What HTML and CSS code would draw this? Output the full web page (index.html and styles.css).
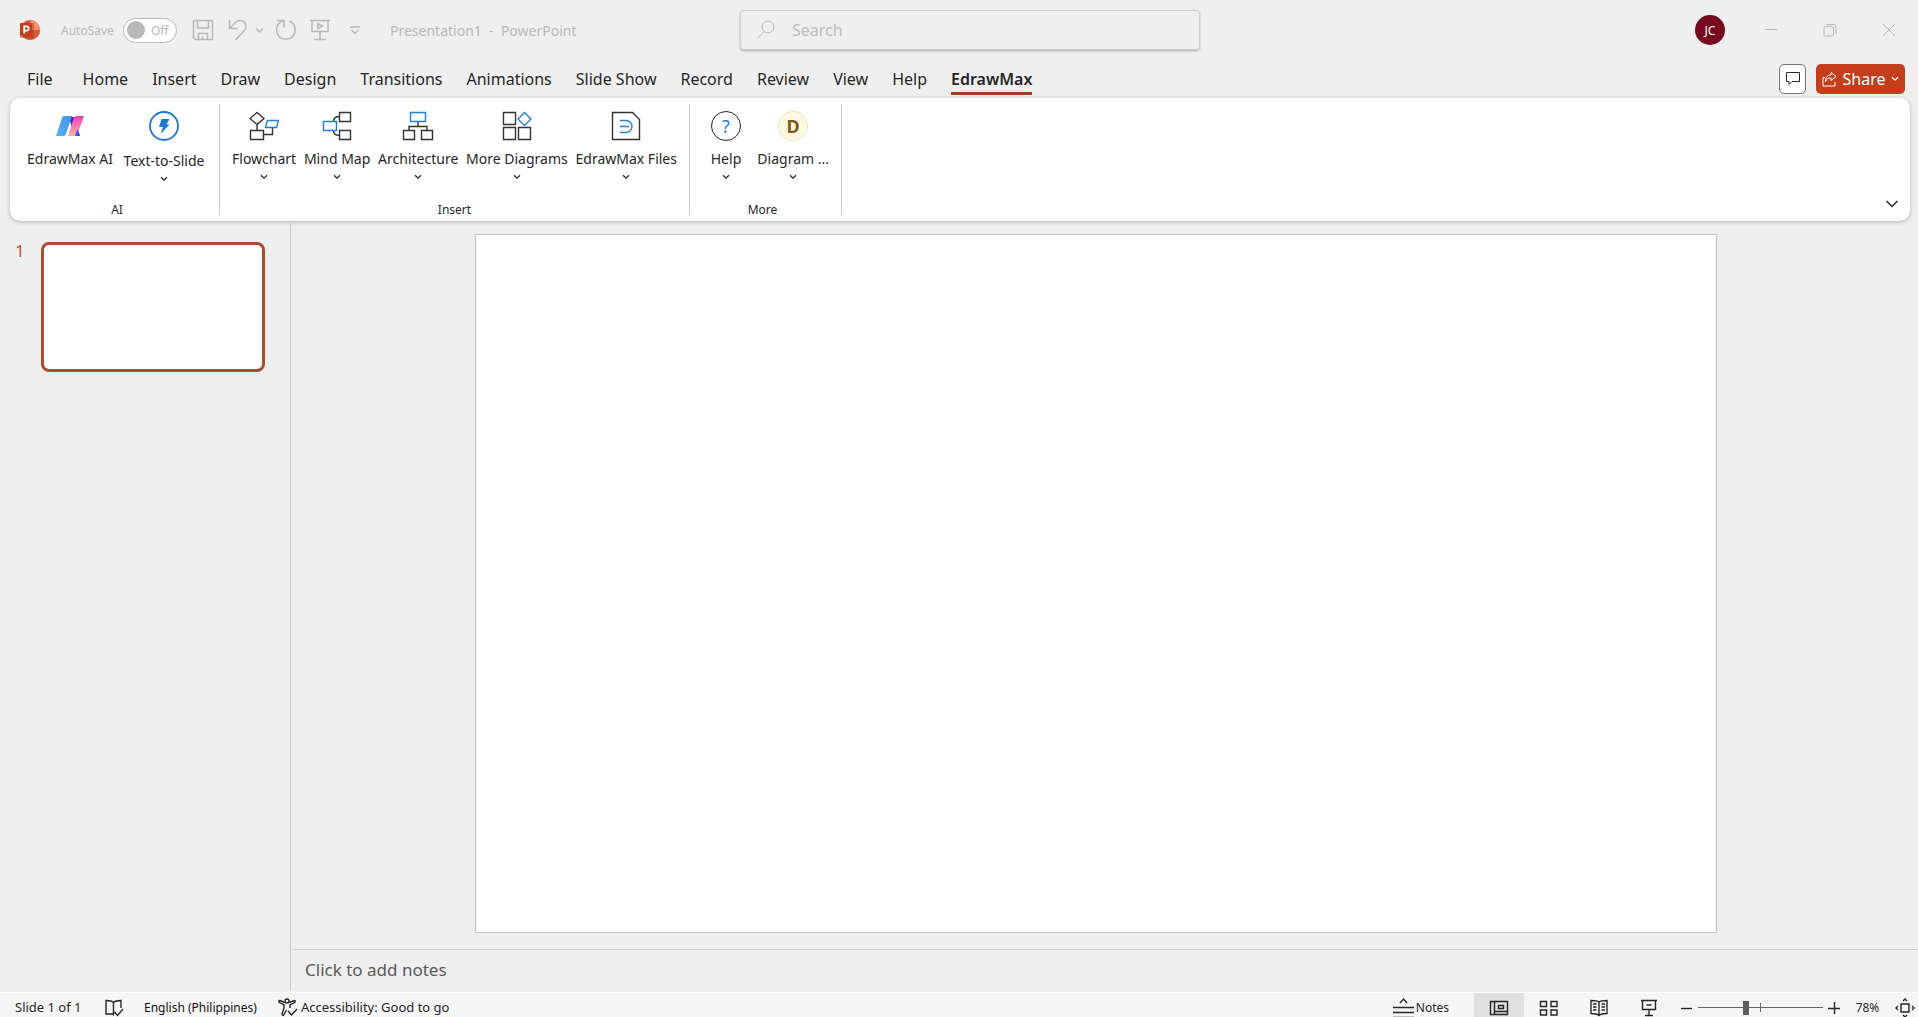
FILE: index.html
```html
<!DOCTYPE html>
<html lang="en">
<head>
    <meta charset="UTF-8">
    <meta name="viewport" content="width=device-width, initial-scale=1.0">
    <title>Presentation1 - PowerPoint</title>
    <link rel="stylesheet" href="styles.css">
</head>
<body>
    <!-- reused icons -->
    <svg class="sprite" aria-hidden="true">
        <symbol id="chevron" viewBox="0 0 8 6"><path d="M1 1.2l3 3 3-3" fill="none" stroke="currentColor" stroke-width="1.3"/></symbol>
        <symbol id="chevron-wide" viewBox="0 0 14 10"><path d="M1.500 2l5.500 5.500L12.500 2" fill="none" stroke="currentColor" stroke-width="1.500"/></symbol>
        <linearGradient id="aiBlue" x1="0" y1="1" x2="1" y2="0"><stop offset="0" stop-color="#4fb4f5"/><stop offset="1" stop-color="#4a8fe8"/></linearGradient>
        <linearGradient id="aiPink" x1="0" y1="1" x2="0" y2="0"><stop offset="0" stop-color="#f7b5a8"/><stop offset="1" stop-color="#f03cb4"/></linearGradient>
    </svg>

    <header class="titlebar">
        <div class="title-left">
            <svg class="logo" width="22" height="24" viewBox="0 0 22 24">
                <circle cx="11" cy="12" r="10" fill="#d35230"/>
                <path d="M11 2a10 10 0 0 1 10 10H11z" fill="#ff8f6b"/>
                <path d="M1 12h20a10 10 0 0 1-20 0z" fill="#d95a3a"/>
                <rect x="1" y="5" width="14" height="15" rx="1" fill="#8e2f17" opacity=".4"/>
                <rect x="1" y="5" width="12" height="13" rx="1" fill="#c43e1c"/>
                <path d="M5.200 15.500V8.300H7.500a2 2 0 0 1 0 4.300H5.200" fill="none" stroke="#fff" stroke-width="1.800"/>
            </svg>
            <label class="autosave"><span>AutoSave</span>
                <input type="checkbox" class="toggle-input">
                <span class="toggle"><span class="knob"></span>Off</span>
            </label>
            <button class="quick save" aria-label="Save">
                <svg width="22" height="22" viewBox="0 0 22 22"><path d="M1.500 1.500h19v19h-17l-2-2zM5.500 1.500v7.500h11V1.500M6.500 20.500v-6h9v6M10.500 20.500v-3"/></svg>
            </button>
            <button class="quick undo" aria-label="Undo">
                <svg width="20" height="22" viewBox="0 0 20 22"><path d="M1.500 1v8.500H9.500M1.500 9.500L7.500 3.500c3-3 7-2.500 9 0s2 6-.500 8.500L7.500 21"/></svg>
            </button>
            <button class="quick more" aria-label="Undo options"><svg width="9" height="7"><use href="#chevron"/></svg></button>
            <button class="quick redo" aria-label="Redo">
                <svg width="22" height="22" viewBox="0 0 22 22"><path d="M2 1.500h7v7M9 1.500C4 3 1.500 6.500 1.500 11a9.300 9.300 0 0 0 18.700 0c0-4-2.500-7.500-5.700-8.800"/></svg>
            </button>
            <button class="quick present" aria-label="Start from beginning">
                <svg width="20" height="22" viewBox="0 0 20 22"><path d="M0 1.500h20M2 1.500v11h16v-11M10 12.500v8M4 20.500h12M8 4.500v5l4.500-2.500z"/></svg>
            </button>
            <button class="quick customize" aria-label="Customize toolbar">
                <svg width="10" height="9" viewBox="0 0 10 9"><path d="M0 1h10M1.500 4L5 7.500 8.500 4"/></svg>
            </button>
            <span class="doc-title">Presentation1&nbsp; -&nbsp; PowerPoint</span>
        </div>
        <div class="search">
            <svg width="18" height="20" viewBox="0 0 18 20"><circle cx="11" cy="7" r="6"/><path d="M7 11.500L.500 18.500"/></svg>
            <input type="text" placeholder="Search" aria-label="Search">
        </div>
        <div class="title-right">
            <button class="avatar">JC</button>
            <button class="win" aria-label="Minimize"><svg width="14" height="14"><path d="M1 6.500h12"/></svg></button>
            <button class="win" aria-label="Restore"><svg width="14" height="14" viewBox="0 0 14 14"><rect x="1" y="3.500" width="9.500" height="9.500" rx="1.500"/><path d="M3.500 1.500H10c2 0 3 1 3 3V11"/></svg></button>
            <button class="win" aria-label="Close"><svg width="14" height="14"><path d="M1 1l12 12M13 1L1 13"/></svg></button>
        </div>
    </header>

    <nav class="tabs">
        <a href="#" class="tab file">File</a>
        <a href="#" class="tab">Home</a>
        <a href="#" class="tab">Insert</a>
        <a href="#" class="tab">Draw</a>
        <a href="#" class="tab">Design</a>
        <a href="#" class="tab">Transitions</a>
        <a href="#" class="tab">Animations</a>
        <a href="#" class="tab">Slide Show</a>
        <a href="#" class="tab">Record</a>
        <a href="#" class="tab">Review</a>
        <a href="#" class="tab">View</a>
        <a href="#" class="tab">Help</a>
        <a href="#" class="tab active">EdrawMax</a>
        <div class="tab-actions">
            <button class="comment" aria-label="Comments">
                <svg width="16" height="16" viewBox="0 0 16 16"><path d="M1.500 1.500h13v9H7l-3 3v-3H1.500z"/></svg>
            </button>
            <button class="share">
                <svg width="15" height="16" viewBox="0 0 15 16"><path d="M3 6.500H1v8.500h12v-4M9 1.500l5 4-5 4V7C6 7 4.500 8 3.500 10.500 3.500 6.500 5.500 4 9 4z"/></svg>
                Share
                <svg width="8" height="6"><use href="#chevron"/></svg>
            </button>
        </div>
    </nav>

    <section class="ribbon">
        <div class="group group-ai">
            <div class="tools">
                <button class="tool">
                    <svg width="30" height="30" viewBox="0 0 30 30">
                        <path d="M14 6h5l6 19h-6z" fill="#2d2fd0"/>
                        <path d="M9 5h8l-6 18c-.5 1.500-1.500 2-3 2H1L7 7c.4-1.300 1-2 2-2z" fill="url(#aiBlue)"/>
                        <path d="M22 5h7l-6 17c-.7 2-1.700 3-3.500 3H13l5.500-17c.7-2 1.500-3 3.500-3z" fill="url(#aiPink)"/>
                        <path d="M22.500 18l2.500 7h-5z" fill="#3e55d8"/>
                    </svg>
                    EdrawMax AI
                </button>
                <button class="tool text-to-slide">
                    <svg width="30" height="32" viewBox="0 0 30 32"><circle cx="15" cy="15" r="14" fill="none" stroke="#1e78d2" stroke-width="1.800"/><path d="M12.500 8h8l-3 5.500h3L11.500 23l2.500-7h-4z" fill="#1e78d2"/></svg>
                    Text-to-Slide
                    <svg class="drop" width="8" height="6"><use href="#chevron"/></svg>
                </button>
            </div>
            <div class="group-name">AI</div>
        </div>
        <div class="group group-insert">
            <div class="tools">
                <button class="tool">
                    <svg width="30" height="30" viewBox="0 0 30 30" class="line"><path d="M8 1.500l7 6-7 6-7-6zM8 13.500v6M1.500 19.500h13v9h-13zM14.500 23.500h9v-7"/><path class="blue" d="M18.500 9.500h11l-2 7h-11z"/></svg>
                    Flowchart
                    <svg class="drop" width="8" height="6"><use href="#chevron"/></svg>
                </button>
                <button class="tool">
                    <svg width="30" height="30" viewBox="0 0 30 30" class="line"><path d="M17.500 1.500h11v9h-11zM17.500 19.500h11v9h-11zM17.500 5.500c-4 0-6 1.500-6 5M17.500 24.500c-4 0-6-1.500-6-5"/><path class="blue" d="M1.500 10.500h13v9h-13z"/></svg>
                    Mind Map
                    <svg class="drop" width="8" height="6"><use href="#chevron"/></svg>
                </button>
                <button class="tool">
                    <svg width="32" height="30" viewBox="0 0 32 30" class="line"><path d="M1.500 19.500h11v9h-11zM19.500 19.500h11v9h-11zM16 10.500v5M7 19.500v-4h18v4"/><path class="blue" d="M8.500 1.500h15v9h-15z"/></svg>
                    Architecture
                    <svg class="drop" width="8" height="6"><use href="#chevron"/></svg>
                </button>
                <button class="tool">
                    <svg width="30" height="30" viewBox="0 0 30 30" class="line"><path d="M1.500 1.500h12v12h-12zM1.500 16.500h12v12h-12zM16.500 16.500h12v12h-12z"/><path class="blue" d="M22.500 1.500l6.500 6.500-6.500 6.500L16 8z"/></svg>
                    More Diagrams
                    <svg class="drop" width="8" height="6"><use href="#chevron"/></svg>
                </button>
                <button class="tool">
                    <svg width="30" height="30" viewBox="0 0 30 30" class="line"><path d="M1.500 1.500h20l7 7v20h-27z"/><path class="blue" d="M9 9.500h6a6 6 0 0 1 0 12H9M9 15.500h9"/></svg>
                    EdrawMax Files
                    <svg class="drop" width="8" height="6"><use href="#chevron"/></svg>
                </button>
            </div>
            <div class="group-name">Insert</div>
        </div>
        <div class="group group-more">
            <div class="tools">
                <button class="tool help">
                    <span class="round question">?</span>
                    Help
                    <svg class="drop" width="8" height="6"><use href="#chevron"/></svg>
                </button>
                <button class="tool">
                    <span class="round letter">D</span>
                    Diagram ...
                    <svg class="drop" width="8" height="6"><use href="#chevron"/></svg>
                </button>
            </div>
            <div class="group-name">More</div>
        </div>
        <button class="collapse" aria-label="Collapse ribbon"><svg width="14" height="10"><use href="#chevron-wide"/></svg></button>
    </section>

    <main class="workspace">
        <aside class="thumbs">
            <span class="thumb-number">1</span>
            <button class="thumb" aria-label="Slide 1"></button>
        </aside>
        <section class="editor">
            <div class="canvas"><div class="slide"></div></div>
            <textarea class="notes" rows="1" placeholder="Click to add notes" aria-label="Notes"></textarea>
        </section>
    </main>

    <footer class="status">
        <span class="slide-count">Slide 1 of 1</span>
        <button class="proof" aria-label="Spelling">
            <svg width="19" height="18" viewBox="0 0 19 18"><path d="M8.500 15V3.500C6.500 1.500 4 1.500 1 1.500V15h6.500l1.500 1.500M8.500 3.500c2-2 4.500-2 7.500-2V9M9.500 13l3 3.500L18 10"/></svg>
        </button>
        <button class="language">English (Philippines)</button>
        <button class="access">
            <svg width="20" height="19" viewBox="0 0 20 19"><circle cx="9" cy="3" r="2"/><path d="M6.500 4.500L2 2.500c-1.500 0-1.500 1.500-.500 2L6 7v3l-2 6c0 1.500 1.500 2 2 .500L8.500 12M11.500 4.500L16 2.500c1.500 0 1.500 1.500.500 2L12 7v3M10 13l3.500 4L19 11"/></svg>
            Accessibility: Good to go
        </button>
        <div class="status-right">
            <button class="notes-toggle">
                <svg width="21" height="22" viewBox="0 0 21 22"><path d="M7 6l3.500-4L14 6M0 10.500h21M0 15.500h21M0 20.500h21"/></svg>
                Notes
            </button>
            <button class="view current" aria-label="Normal"><svg width="20" height="18" viewBox="0 0 20 18"><path d="M1.500 2.500h17v13h-17zM5.500 2.500v13M5.500 12.500h13M9.500 6.500h5v3h-5z"/></svg></button>
            <button class="view" aria-label="Slide Sorter"><svg width="20" height="18" viewBox="0 0 20 18"><path d="M1.500 2.500h6v5h-6zM12 2.500h6v5h-6zM1.500 11h6v5h-6zM12 11h6v5h-6z"/></svg></button>
            <button class="view" aria-label="Reading View"><svg width="20" height="18" viewBox="0 0 20 18"><path d="M10 3C8 1.500 5 1.500 2 1.500v13c3 0 6 0 8 2 2-2 5-2 8-2v-13c-3 0-6 0-8 1.500zM10 3v13.500M4 5h3.500M4 8h3.500M4 11h3.500M12.500 5H16M12.500 8H16M12.500 11H16"/></svg></button>
            <button class="view" aria-label="Slide Show"><svg width="20" height="18" viewBox="0 0 20 18"><path d="M2 1.500h16M3.500 1.500v9h13v-9M10 10.500v6M6 16.500h8M7.500 6h5"/></svg></button>
            <button class="zoom-out" aria-label="Zoom out"><svg width="12" height="12"><path d="M0 6.500h11"/></svg></button>
            <input class="zoom" type="range" min="0" max="100" value="38" aria-label="Zoom">
            <button class="zoom-in" aria-label="Zoom in"><svg width="12" height="12"><path d="M0 6.500h12M6.500 0v12"/></svg></button>
            <button class="percent">78%</button>
            <button class="fit" aria-label="Fit to window"><svg width="20" height="20" viewBox="0 0 20 20"><path d="M6 6h8v8H6zM8 3l2-2 2 2M8 17l2 2 2-2M3 8l-2 2 2 2M17 8l2 2-2 2"/></svg></button>
        </div>
    </footer>
</body>
</html>
```
FILE: styles.css
```css
* {
    box-sizing: border-box;
}
body {
    display: flex;
    flex-direction: column;
    height: 100vh;
    margin: 0;
    overflow: hidden;
    font-family: "Noto Sans", "Open Sans", sans-serif;
    font-size: 14px;
    background-color: #efefef;
    color: #262626;
}
button {
    display: flex;
    align-items: center;
    justify-content: center;
    flex-shrink: 0;
    padding: 0;
    border: none;
    background: none;
    color: inherit;
    font: inherit;
    white-space: nowrap;
}
svg {
    display: block;
    flex-shrink: 0;
    fill: none;
    stroke: currentColor;
}
symbol, .logo, .tool svg {
    stroke: none;
}
.sprite {
    position: absolute;
    width: 0;
    height: 0;
}

/* title bar */
.titlebar {
    display: flex;
    align-items: center;
    height: 60px;
    flex-shrink: 0;
    color: #b8b8b8;
}
.title-left {
    display: flex;
    align-items: center;
    flex: 0 0 740px;
    padding-left: 19px;
}
.autosave {
    display: flex;
    align-items: center;
    justify-content: space-between;
    width: 116px;
    margin-left: 20px;
    font-size: 12px;
}
.toggle-input {
    position: absolute;
    opacity: 0;
}
.toggle {
    display: flex;
    align-items: center;
    gap: 6px;
    width: 54px;
    height: 25px;
    padding-left: 3px;
    border: 1px solid #b8b8b8;
    border-radius: 13px;
    background-color: #fff;
}
.knob {
    width: 18px;
    height: 18px;
    border-radius: 50%;
    background-color: #b8b8b8;
}
.quick svg {
    stroke-width: 1.5;
}
.save {
    margin-left: 15px;
}
.undo {
    margin-left: 14px;
}
.more {
    margin-left: 7px;
}
.redo {
    margin-left: 11px;
}
.present {
    margin-left: 13px;
}
.customize {
    margin-left: 20px;
}
.doc-title {
    margin-left: 30px;
    white-space: nowrap;
}
.search {
    display: flex;
    align-items: center;
    gap: 17px;
    flex: 0 1 460px;
    height: 40px;
    padding: 0 16px;
    border: 1px solid #d0d0d0;
    border-radius: 4px;
    box-shadow: 0 1px 2px #aaa;
}
.search input {
    flex: 1;
    min-width: 0;
    padding: 0;
    border: none;
    outline: none;
    background: none;
    color: inherit;
    font: inherit;
    font-size: 16px;
}
.search input::placeholder {
    color: #bcbcbc;
}
.title-right {
    display: flex;
    align-items: center;
    margin-left: auto;
}
.avatar {
    width: 30px;
    height: 30px;
    margin-right: 16px;
    border-radius: 50%;
    background-color: #750b1c;
    color: #fff;
    font-size: 12px;
}
.win {
    width: 59px;
    height: 40px;
}

/* tabs */
.tabs {
    display: flex;
    align-items: center;
    gap: 24px;
    height: 38px;
    flex-shrink: 0;
    padding: 0 13px 0 27px;
}
.tab {
    border-bottom: 3px solid transparent;
    padding-top: 4px;
    color: #262626;
    font-size: 16px;
    line-height: 25px;
    text-decoration: none;
    white-space: nowrap;
}
.file {
    margin-right: 6px;
}
.active {
    border-color: #a33d22;
    font-weight: 600;
}
.tab-actions {
    display: flex;
    gap: 10px;
    margin-left: auto;
}
.comment {
    width: 27px;
    height: 30px;
    border: 1px solid #767676;
    border-radius: 5px;
    background-color: #fff;
}
.share {
    gap: 6px;
    width: 89px;
    height: 30px;
    border-radius: 5px;
    background-color: #c43e1c;
    color: #fff;
    font-size: 16px;
}

/* ribbon */
.ribbon {
    display: flex;
    flex-shrink: 0;
    height: 123px;
    margin: 0 8px 0 10px;
    padding: 6px 0;
    border-radius: 10px;
    background-color: #fff;
    box-shadow: 0 1px 4px rgba(0, 0, 0, 0.25);
}
.group {
    display: flex;
    flex-direction: column;
    justify-content: space-between;
    padding: 7px 12px 0;
    border-right: 1px solid #c8c8c8;
}
.group-ai {
    width: 210px;
    padding-left: 17px;
}
.group-insert {
    width: 470px;
}
.group-more {
    width: 152px;
    padding-left: 6px;
}
.tools {
    display: flex;
    align-items: flex-start;
    justify-content: space-between;
}
.tool {
    flex-direction: column;
    line-height: 20px;
}
.tool > :first-child {
    margin-bottom: 8px;
}
.tool .drop {
    margin-top: 5px;
    stroke: currentColor;
}
.text-to-slide {
    width: 86px;
}
.line path {
    stroke: #333;
    stroke-width: 1.4;
}
.line .blue {
    stroke: #1e80dc;
}
.help {
    width: 60px;
}
.round {
    width: 30px;
    height: 30px;
    border-radius: 50%;
    font-size: 18px;
    line-height: 28px;
}
.question {
    border: 1px solid #262626;
    color: #1e80dc;
}
.letter {
    border: 1px dotted #ddd2ae;
    background-color: #fff7df;
    color: #7d5a1c;
    font-weight: 700;
}
.group-name {
    font-size: 12px;
    line-height: 10px;
    text-align: center;
}
.collapse {
    align-self: flex-end;
    width: 30px;
    height: 22px;
    margin-left: auto;
    margin-right: 3px;
}

/* workspace */
.workspace {
    display: flex;
    flex: 1;
    min-height: 0;
    padding: 2px 0 1px;
}
.thumbs {
    display: flex;
    align-items: flex-start;
    flex: 0 0 291px;
    padding: 19px 25px 0 15px;
    border-right: 1px solid #c8c8c8;
}
.thumb-number {
    width: 26px;
    color: #c0502f;
    font-size: 17px;
    line-height: 18px;
}
.thumb {
    flex: 1;
    height: 130px;
    border: 3px solid #a84d36;
    border-radius: 8px;
    background-color: #fff;
}
.editor {
    display: flex;
    flex-direction: column;
    flex: 1;
    margin-left: 2px;
}
.canvas {
    flex: 1;
    padding: 11px 201px 0 182px;
}
.slide {
    aspect-ratio: 16 / 9;
    border: 1px solid #c0c0c0;
    background-color: #fff;
}
.notes {
    height: 42px;
    padding: 8px 12px;
    border: none;
    border-top: 1px solid #cdcdcd;
    outline: none;
    background: none;
    font: inherit;
    font-size: 17px;
    line-height: 24px;
    resize: none;
}
.notes::placeholder {
    color: #595959;
}

/* status bar */
.status {
    display: flex;
    flex-shrink: 0;
    height: 25px;
    padding-left: 15px;
    border-top: 1px solid #fff;
    background-color: #f5f5f5;
    font-size: 12px;
    line-height: 29px;
}
.status button {
    height: 29px;
}
.status svg {
    stroke-width: 1.4;
}
.slide-count {
    width: 89px;
    font-size: 13px;
}
.status .proof {
    width: 20px;
}
.language {
    margin-left: 20px;
    color: #111;
}
.access {
    gap: 3px;
    margin-left: 21px;
    font-size: 13px;
}
.status-right {
    display: flex;
    margin-left: auto;
}
.notes-toggle {
    gap: 2px;
    margin-right: 25px;
}
.view {
    width: 50px;
}
.current {
    background-color: #e0e0e0;
}
.zoom-out {
    margin-left: 7px;
}
.zoom {
    appearance: none;
    width: 125px;
    height: 29px;
    margin: 0 5px;
    background: linear-gradient(#666, #666) center / 1px 9px no-repeat, linear-gradient(#666, #666) center / 100% 1px no-repeat;
}
.zoom::-webkit-slider-thumb {
    appearance: none;
    width: 6px;
    height: 14px;
    background-color: #5e5e5e;
}
.percent {
    width: 55px;
}
.fit {
    width: 20px;
    margin-right: 3px;
}
```
